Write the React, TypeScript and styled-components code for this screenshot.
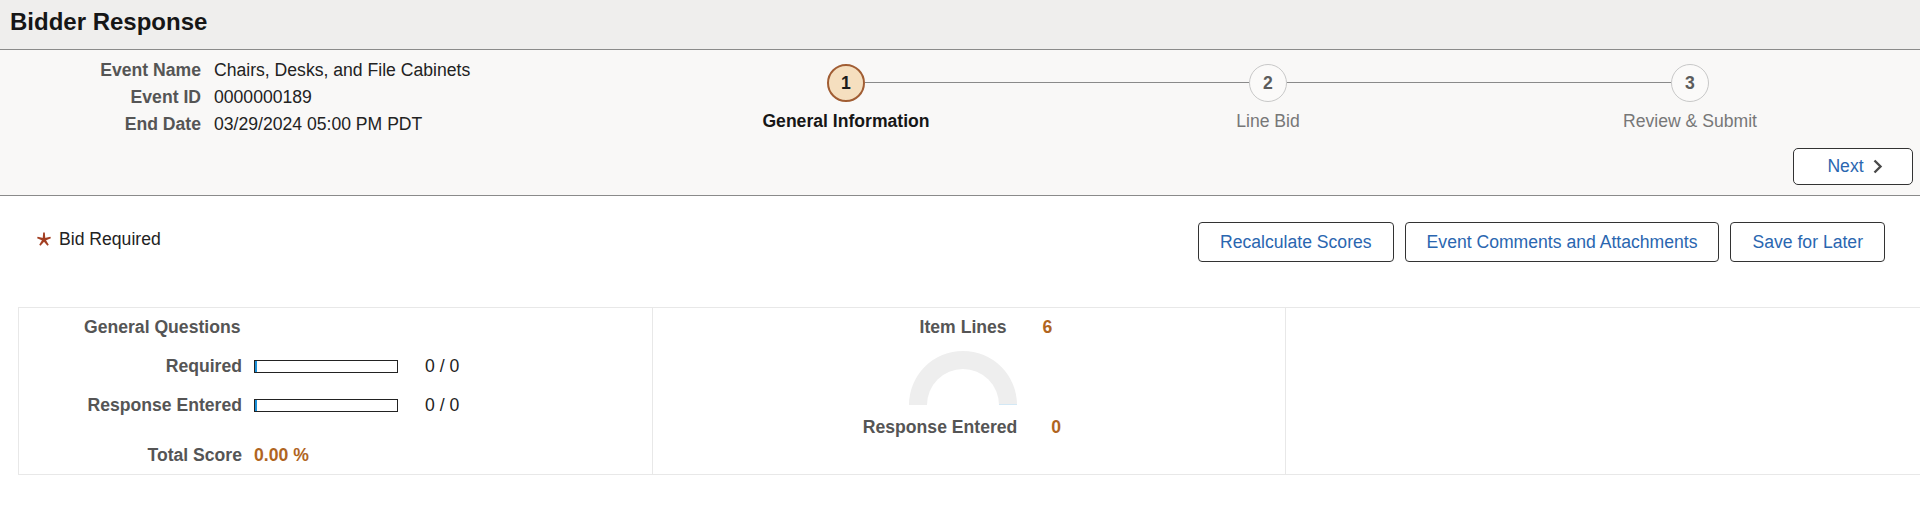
import React from "react";
import styled, { createGlobalStyle } from "styled-components";

const Global = createGlobalStyle`
  html, body { margin: 0; padding: 0; background: #ffffff; }
  body {
    font-family: "Liberation Sans", Arial, sans-serif;
    font-size: 17.6px;
    color: #222;
    overflow: hidden;
  }
  * { box-sizing: border-box; }
`;

const Page = styled.div`
  width: 1920px;
`;

const Header = styled.header`
  height: 50px;
  background: #efeeed;
  border-bottom: 1px solid #8a8a8a;
  display: flex;
  align-items: center;
  padding: 0 0 5px 10px;
`;

const Title = styled.h1`
  margin: 0;
  font-size: 24px;
  font-weight: 700;
  color: #161616;
`;

const Summary = styled.section`
  height: 146px;
  background: #f9f8f7;
  border-bottom: 1px solid #8a8a8a;
  display: flex;
  flex-direction: column;
`;

const SummaryTop = styled.div`
  display: grid;
  grid-template-columns: 635px 1266px;
`;

const InfoList = styled.dl`
  margin: 0;
  padding-top: 7px;
  display: grid;
  grid-template-columns: 201px 1fr;
  column-gap: 13px;
  line-height: 27px;
`;

const InfoLabel = styled.dt`
  text-align: right;
  font-weight: 700;
  color: #555;
`;

const InfoValue = styled.dd`
  margin: 0;
  color: #222;
`;

const Steps = styled.ol`
  list-style: none;
  margin: 0;
  padding: 14px 0 0;
  display: grid;
  grid-template-columns: repeat(3, 1fr);
`;

const Step = styled.li<{ $last?: boolean }>`
  position: relative;
  display: flex;
  flex-direction: column;
  align-items: center;
  &::after {
    content: "";
    display: ${(p) => (p.$last ? "none" : "block")};
    position: absolute;
    top: 18px;
    left: calc(50% + 19px);
    width: calc(100% - 38px);
    height: 1px;
    background: #8a8a8a;
  }
`;

const StepCircle = styled.span<{ $active?: boolean }>`
  width: 38px;
  height: 38px;
  border-radius: 50%;
  display: flex;
  align-items: center;
  justify-content: center;
  font-weight: 700;
  font-size: 17.6px;
  background: ${(p) => (p.$active ? "#f5dfbf" : "#fbfaf9")};
  border: ${(p) => (p.$active ? "2px solid #a15d33" : "1px solid #c8c8c8")};
  color: ${(p) => (p.$active ? "#1b1b1b" : "#5c5c5c")};
`;

const StepLabel = styled.span<{ $active?: boolean }>`
  margin-top: 9px;
  line-height: 20px;
  font-weight: ${(p) => (p.$active ? 700 : 400)};
  color: ${(p) => (p.$active ? "#161616" : "#777")};
`;

const SummaryActions = styled.div`
  margin-top: auto;
  padding: 0 7px 10px 0;
  display: flex;
  justify-content: flex-end;
`;

const Button = styled.button`
  height: 40px;
  padding: 0 21px;
  background: #ffffff;
  border: 1px solid #333;
  border-radius: 4px;
  font-family: inherit;
  font-size: 17.6px;
  color: #2a66b0;
  display: inline-flex;
  align-items: center;
  justify-content: center;
  gap: 8px;
  cursor: pointer;
`;

const NextButton = styled(Button)`
  width: 120px;
  height: 37px;
  border-radius: 5px;
  padding: 0 0 0 4px;
`;

const Toolbar = styled.div`
  margin-top: 26px;
  padding: 0 35px 0 37px;
  display: flex;
  align-items: center;
  justify-content: space-between;
`;

const Legend = styled.div`
  display: flex;
  align-items: center;
  gap: 8px;
  color: #222;
  margin-top: -6px;
`;

const ButtonGroup = styled.div`
  display: flex;
  gap: 11px;
`;

const Panel = styled.div`
  margin: 45px 0 0 18px;
  height: 168px;
  border-top: 1px solid #e8e8e8;
  border-bottom: 1px solid #e8e8e8;
  border-left: 1px solid #e8e8e8;
  display: grid;
  grid-template-columns: repeat(3, 1fr);
`;

const PanelCol = styled.div<{ $last?: boolean }>`
  border-right: ${(p) => (p.$last ? "none" : "1px solid #e8e8e8")};
  padding-top: 9px;
  line-height: 20px;
`;

const ColTitle = styled.div`
  padding-left: 65px;
  font-weight: 700;
  color: #555;
`;

const QGrid = styled.div`
  margin-top: 19px;
  display: grid;
  grid-template-columns: 223px 144px 1fr;
  column-gap: 12px;
  row-gap: 19px;
  align-items: center;
`;

const QLabel = styled.div<{ $gap?: number }>`
  text-align: right;
  font-weight: 700;
  color: #555;
  margin-top: ${(p) => p.$gap ?? 0}px;
`;

const Bar = styled.div`
  height: 13px;
  border: 1px solid #222;
  background: #fff;
  position: relative;
  &::before {
    content: "";
    position: absolute;
    left: 0;
    top: 0;
    bottom: 0;
    width: 2px;
    background: #1a8fd8;
  }
`;

const Count = styled.div`
  padding-left: 15px;
  color: #222;
`;

const Accent = styled.div<{ $gap?: number }>`
  grid-column: 2 / span 2;
  font-weight: 700;
  color: #b0651f;
  margin-top: ${(p) => p.$gap ?? 0}px;
`;

const GaugeCol = styled(PanelCol)`
  display: flex;
  flex-direction: column;
  align-items: center;
`;

const Stat = styled.div<{ $gap: number; $shift: number }>`
  display: flex;
  gap: ${(p) => p.$gap}px;
  transform: translateX(${(p) => p.$shift}px);
`;

const StatLabel = styled.span`
  font-weight: 700;
  color: #555;
`;

const StatValue = styled.span`
  font-weight: 700;
  color: #b0651f;
`;

const Gauge = styled.svg`
  display: block;
  margin: 14px 0 12px;
  transform: translateX(-6px);
`;

const Star = () => (
  <svg width="14" height="14" viewBox="0 0 14 14" aria-hidden="true">
    <g transform="translate(7 7.6)" fill="#a33f22">
      {[0, 72, 144, 216, 288].map((a) => (
        <polygon key={a} points="-1.4,0 1.4,0 0.8,-7 -0.8,-7" transform={`rotate(${a})`} />
      ))}
    </g>
  </svg>
);

const Chevron = () => (
  <svg width="11" height="15" viewBox="0 0 11 15" aria-hidden="true">
    <polyline points="2.5,1.5 8.5,7.5 2.5,13.5" fill="none" stroke="#4a4a4a" strokeWidth="2.4" />
  </svg>
);

export default function App() {
  const steps = ["General Information", "Line Bid", "Review & Submit"];
  return (
    <Page>
      <Global />
      <Header>
        <Title>Bidder Response</Title>
      </Header>
      <Summary>
        <SummaryTop>
          <InfoList>
            <InfoLabel>Event Name</InfoLabel>
            <InfoValue>Chairs, Desks, and File Cabinets</InfoValue>
            <InfoLabel>Event ID</InfoLabel>
            <InfoValue>0000000189</InfoValue>
            <InfoLabel>End Date</InfoLabel>
            <InfoValue>03/29/2024 05:00 PM PDT</InfoValue>
          </InfoList>
          <Steps>
            {steps.map((s, i) => (
              <Step key={s} $last={i === steps.length - 1}>
                <StepCircle $active={i === 0}>{i + 1}</StepCircle>
                <StepLabel $active={i === 0}>{s}</StepLabel>
              </Step>
            ))}
          </Steps>
        </SummaryTop>
        <SummaryActions>
          <NextButton>
            Next
            <Chevron />
          </NextButton>
        </SummaryActions>
      </Summary>

      <Toolbar>
        <Legend>
          <Star />
          <span>Bid Required</span>
        </Legend>
        <ButtonGroup>
          <Button>Recalculate Scores</Button>
          <Button>Event Comments and Attachments</Button>
          <Button>Save for Later</Button>
        </ButtonGroup>
      </Toolbar>

      <Panel>
        <PanelCol>
          <ColTitle>General Questions</ColTitle>
          <QGrid>
            <QLabel>Required</QLabel>
            <Bar />
            <Count>0 / 0</Count>
            <QLabel>Response Entered</QLabel>
            <Bar />
            <Count>0 / 0</Count>
            <QLabel $gap={11}>Total Score</QLabel>
            <Accent $gap={11}>0.00 %</Accent>
          </QGrid>
        </PanelCol>
        <GaugeCol>
          <Stat $gap={36} $shift={17}>
            <StatLabel>Item Lines</StatLabel>
            <StatValue>6</StatValue>
          </Stat>
          <Gauge width="108" height="54" viewBox="0 0 108 54" aria-hidden="true">
            <path d="M0 54 A54 54 0 0 1 108 54 L90 54 A36 36 0 0 0 18 54 Z" fill="#eeeeee" />
            <line x1="90" y1="53.5" x2="108" y2="53.5" stroke="#d3e8f5" strokeWidth="1" />
          </Gauge>
          <Stat $gap={34} $shift={-7}>
            <StatLabel>Response Entered</StatLabel>
            <StatValue>0</StatValue>
          </Stat>
        </GaugeCol>
        <PanelCol $last />
      </Panel>
    </Page>
  );
}
